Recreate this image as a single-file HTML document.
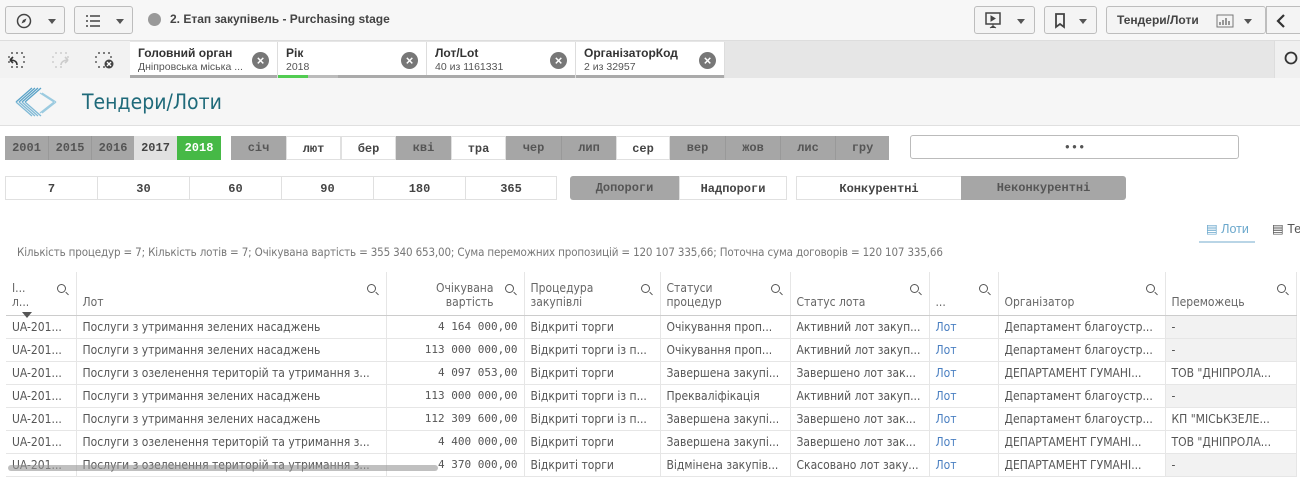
<!DOCTYPE html>
<html><head><meta charset="utf-8"><style>
*{box-sizing:border-box;margin:0;padding:0}
body{width:1300px;height:493px;overflow:hidden;background:#fff;font-family:"Liberation Sans","DejaVu Sans",sans-serif;position:relative;color:#595959}
.abs{position:absolute}
.tb{background:#f4f4f4;border:1px solid #bdbdbd;border-radius:3px;height:28px;top:6px}
.caret{position:absolute;width:0;height:0;border-left:4px solid transparent;border-right:4px solid transparent;border-top:5px solid #555}
.chip{position:absolute;top:42px;height:36px;background:#fff;border-right:1px solid #ddd}
.chip b{position:absolute;left:8px;top:4px;font-size:12px;color:#333}
.chip span{position:absolute;left:8px;top:19px;font-size:10.5px;color:#555}
.chip i{position:absolute;right:8px;top:10px;width:17px;height:17px;border-radius:50%;background:#777;color:#fff;font-style:normal;font-size:13px;line-height:17px;text-align:center;font-weight:bold}
.chip u{position:absolute;left:0;bottom:0;height:3px;background:#aaa;width:100%;text-decoration:none}
.btn{position:absolute;height:24px;font-size:12px;font-weight:bold;text-align:center;line-height:24px;color:#444;font-family:"Liberation Mono","DejaVu Sans Mono",monospace}
.g{background:#a6a6a6;color:#555}
.w{background:#fff;border:1px solid #e0e0e0}
table{position:absolute;left:6px;top:272px;border-collapse:collapse;font-size:12px;font-family:"DejaVu Sans Condensed","DejaVu Sans",sans-serif;table-layout:fixed}
td,th{border-right:1px solid #e6e6e6;border-bottom:1px solid #e6e6e6;height:23px;padding:0 6px;white-space:nowrap;overflow:hidden;color:#555;font-weight:normal;text-align:left}
th{height:43px;vertical-align:bottom;padding-bottom:6px;position:relative;border-bottom:1px solid #ccc;color:#666}
th .s{position:absolute;right:10px;top:12px;width:9px;height:9px;border:1.3px solid #555;border-radius:50%}
th .s:after{content:"";position:absolute;width:4px;height:1.3px;background:#555;right:-4px;bottom:-2px;transform:rotate(45deg)}
.n{text-align:right;font-family:"DejaVu Sans Mono",monospace;font-size:11px}
.l{color:#4a7fc1}
.gr{background:#f2f2f2}
</style></head><body>
<div class="abs" style="left:0;top:0;width:1300px;height:41px;background:#f7f7f7;border-bottom:1px solid #ddd"></div>
<div class="abs tb" style="left:5px;width:60px"><svg class="abs" style="left:10px;top:6px" width="16" height="16"><circle cx="8" cy="8" r="6.5" fill="none" stroke="#444" stroke-width="1.5"/><path d="M10.5 5.5 L9 9 L5.5 10.5 L7 7Z" fill="#444"/></svg><div class="caret" style="left:42px;top:12px"></div></div>
<div class="abs tb" style="left:74px;width:59px"><svg class="abs" style="left:10px;top:7px" width="16" height="14"><path d="M1 2h2M5 2h10M1 7h2M5 7h10M1 12h2M5 12h10" stroke="#444" stroke-width="1.6"/></svg><div class="caret" style="left:41px;top:12px"></div></div>
<div class="abs" style="left:148px;top:13px;width:13px;height:13px;border-radius:50%;background:#999"></div>
<div class="abs" style="left:170px;top:12px;font-size:12px;font-weight:bold;color:#444">2. Етап закупівель - Purchasing stage</div>
<div class="abs tb" style="left:974px;width:61px"><svg class="abs" style="left:10px;top:5px" width="16" height="17"><rect x="1" y="1" width="14" height="11" fill="none" stroke="#444" stroke-width="1.5"/><path d="M6 4l4 2.5-4 2.5z M8 12v3 M5 16l3-2 3 2" fill="#444" stroke="#444"/></svg><div class="caret" style="left:42px;top:12px"></div></div>
<div class="abs tb" style="left:1044px;width:53px"><svg class="abs" style="left:9px;top:6px" width="12" height="16"><path d="M2 1h8v13l-4-3-4 3z" fill="none" stroke="#444" stroke-width="1.8"/></svg><div class="caret" style="left:34px;top:12px"></div></div>
<div class="abs tb" style="left:1106px;width:160px"><span class="abs" style="left:10px;top:6px;font-size:12px;font-weight:bold;color:#444">Тендери/Лоти</span><svg class="abs" style="left:109px;top:7px" width="18" height="14"><rect x="1" y="1" width="16" height="12" fill="none" stroke="#777"/><path d="M4 11V8M7 11V6M10 11V4M13 11V7" stroke="#777" stroke-width="1.5"/></svg><div class="caret" style="left:137px;top:12px"></div></div>
<div class="abs" style="left:1266px;top:6px;width:40px;height:28px;background:#f4f4f4;border:1px solid #bdbdbd"><svg class="abs" style="left:9px;top:7px" width="10" height="14"><path d="M8 1L2 7l6 6" fill="none" stroke="#333" stroke-width="2.2"/></svg></div>
<div class="abs" style="left:0;top:41px;width:1300px;height:37px;background:#e6e6e6"></div>
<div class="abs" style="left:0;top:41px;width:130px;height:37px;background:#f2f2f2"></div>
<svg class="abs" style="left:8px;top:51px" width="120" height="18"><path d="M3 2h2M8 2h2M13 2h2M16 5v2M16 10v2M3 16h2M8 16h2M13 16h2M1 5v2M1 10v2" stroke="#555" stroke-width="1.4"/><path d="M9 14c0-4-3-5-7-5M2 9l3-3M2 9l3 3" fill="none" stroke="#333" stroke-width="1.6"/><path d="M47 2h2M52 2h2M57 2h2M60 5v2M45 5v2M45 10v2M47 16h2M52 16h2" stroke="#ccc" stroke-width="1.4"/><path d="M53 14c0-3 3-5 7-5M60 9l-3-3M60 9l-3 3" fill="none" stroke="#ccc" stroke-width="1.6"/><path d="M90 2h2M95 2h2M100 2h2M103 5v2M88 5v2M88 10v2M90 16h2M95 16h2" stroke="#555" stroke-width="1.4"/><circle cx="101" cy="13" r="4.5" fill="#444"/><path d="M99 11l4 4M103 11l-4 4" stroke="#fff" stroke-width="1.3"/></svg>
<div class="chip" style="left:130px;width:148px"><b>Головний орган</b><span>Дніпровська міська ...</span><i>×</i><u></u></div>
<div class="chip" style="left:278px;width:149px"><b>Рік</b><span>2018</span><i>×</i><u style="background:#bbb"></u><u style="background:#52cc52;width:30px"></u><u style="left:60px;width:89px;background:#aaa"></u></div>
<div class="chip" style="left:427px;width:149px"><b>Лот/Lot</b><span>40 из 1161331</span><i>×</i><u></u></div>
<div class="chip" style="left:576px;width:149px"><b>ОрганізаторКод</b><span>2 из 32957</span><i>×</i><u></u></div>
<div class="abs" style="left:1274px;top:41px;width:26px;height:37px;border-left:1px solid #ddd;background:#f0f0f0"><svg class="abs" style="left:9px;top:10px" width="16" height="16"><circle cx="7" cy="7" r="5.5" fill="none" stroke="#333" stroke-width="1.8"/></svg></div>
<div class="abs" style="left:0;top:78px;width:1300px;height:48px;background:#f6f6f6;border-bottom:1px solid #e0e0e0"></div>
<svg class="abs" style="left:12px;top:85px" width="48" height="34"><g stroke="#5aa3c8" stroke-width="1.3" fill="none"><path d="M20 3L4 17M23 3L7 17M26 3L10 17M29 3L13 17"/><path d="M4 17l16 14M7 17l16 14M10 17l16 14M13 17l16 14" stroke="#7fb9d6"/><path d="M28 8l14 9M30 8l14 9M42 17L28 28M44 17L30 28" stroke="#9ccbe0"/></g></svg>
<div class="abs" style="left:82px;top:90px;font-size:21px;color:#1f6a7a;font-family:'DejaVu Sans Condensed','DejaVu Sans',sans-serif">Тендери/Лоти</div>
<div class="btn g" style="left:5px;top:136px;width:43px">2001</div>
<div class="btn g" style="left:48px;top:136px;width:43px;border-left:1px solid #999">2015</div>
<div class="btn g" style="left:91px;top:136px;width:43px;border-left:1px solid #999">2016</div>
<div class="btn" style="left:134px;top:136px;width:43px;background:#e1e1e1">2017</div>
<div class="btn" style="left:177px;top:136px;width:44px;background:#46b946;color:#fff">2018</div>
<div class="btn g" style="left:231px;top:136px;width:55px">січ</div>
<div class="btn w" style="left:286px;top:136px;width:55px">лют</div>
<div class="btn w" style="left:341px;top:136px;width:55px">бер</div>
<div class="btn g" style="left:396px;top:136px;width:55px">кві</div>
<div class="btn w" style="left:451px;top:136px;width:55px">тра</div>
<div class="btn g" style="left:506px;top:136px;width:55px">чер</div>
<div class="btn g" style="left:561px;top:136px;width:55px;border-left:1px solid #999">лип</div>
<div class="btn w" style="left:616px;top:136px;width:54px">сер</div>
<div class="btn g" style="left:670px;top:136px;width:55px">вер</div>
<div class="btn g" style="left:725px;top:136px;width:55px;border-left:1px solid #999">жов</div>
<div class="btn g" style="left:780px;top:136px;width:55px;border-left:1px solid #999">лис</div>
<div class="btn g" style="left:835px;top:136px;width:54px;border-left:1px solid #999">гру</div>
<div class="btn w" style="left:910px;top:135px;width:329px;border:1px solid #bbb;border-radius:3px;color:#555">•••</div>
<div class="btn w" style="left:5px;top:176px;width:93px">7</div>
<div class="btn w" style="left:97px;top:176px;width:93px">30</div>
<div class="btn w" style="left:189px;top:176px;width:93px">60</div>
<div class="btn w" style="left:281px;top:176px;width:93px">90</div>
<div class="btn w" style="left:373px;top:176px;width:93px">180</div>
<div class="btn w" style="left:465px;top:176px;width:92px">365</div>
<div class="btn g" style="left:570px;top:176px;width:109px;border-radius:3px 0 0 3px">Допороги</div>
<div class="btn w" style="left:679px;top:176px;width:108px">Надпороги</div>
<div class="btn w" style="left:796px;top:176px;width:166px">Конкурентні</div>
<div class="btn g" style="left:961px;top:176px;width:165px;border-radius:0 3px 3px 0">Неконкурентні</div>
<div class="abs" style="left:1199px;top:219px;width:56px;height:24px;border-bottom:2px solid #b9d5e6"></div>
<div class="abs" style="left:1206px;top:221px;font-size:12.5px;color:#6aa7cc;white-space:nowrap">▤ Лоти</div>
<div class="abs" style="left:1272px;top:221px;font-size:12.5px;color:#555;white-space:nowrap;width:40px">▤ Те</div>
<div class="abs" style="left:17px;top:245px;font-size:11.5px;color:#777;font-family:'DejaVu Sans Condensed','DejaVu Sans',sans-serif;letter-spacing:-0.15px">Кількість процедур = 7; Кількість лотів = 7; Очікувана вартість = 355 340 653,00; Сума переможних пропозицій = 120 107 335,66; Поточна сума договорів = 120 107 335,66</div>
<table>
<colgroup><col style="width:70px"><col style="width:310px"><col style="width:138px"><col style="width:136px"><col style="width:130px"><col style="width:139px"><col style="width:69px"><col style="width:167px"><col style="width:131px"></colgroup>
<tr><th>I...<br>л...<span class="s"></span></th><th>Лот<span class="s"></span></th><th style="text-align:right;padding-right:30px">Очікувана<br>вартість<span class="s"></span></th><th>Процедура<br>закупівлі<span class="s"></span></th><th>Статуси<br>процедур<span class="s"></span></th><th>Статус лота<span class="s"></span></th><th>...<span class="s"></span></th><th>Організатор<span class="s"></span></th><th>Переможець<span class="s"></span></th></tr>
<tr><td>UA-201...</td><td>Послуги з утримання зелених насаджень</td><td class="n">4 164 000,00</td><td>Відкриті торги</td><td>Очікування проп...</td><td>Активний лот закуп...</td><td class="l">Лот</td><td>Департамент благоустр...</td><td class="gr">-</td></tr>
<tr><td>UA-201...</td><td>Послуги з утримання зелених насаджень</td><td class="n">113 000 000,00</td><td>Відкриті торги із п...</td><td>Очікування проп...</td><td>Активний лот закуп...</td><td class="l">Лот</td><td>Департамент благоустр...</td><td class="gr">-</td></tr>
<tr><td>UA-201...</td><td>Послуги з озеленення територій та утримання з...</td><td class="n">4 097 053,00</td><td>Відкриті торги</td><td>Завершена закупі...</td><td>Завершено лот зак...</td><td class="l">Лот</td><td>ДЕПАРТАМЕНТ ГУМАНІ...</td><td>ТОВ "ДНІПРОЛА...</td></tr>
<tr><td>UA-201...</td><td>Послуги з утримання зелених насаджень</td><td class="n">113 000 000,00</td><td>Відкриті торги із п...</td><td>Преквaліфікація</td><td>Активний лот закуп...</td><td class="l">Лот</td><td>Департамент благоустр...</td><td class="gr">-</td></tr>
<tr><td>UA-201...</td><td>Послуги з утримання зелених насаджень</td><td class="n">112 309 600,00</td><td>Відкриті торги із п...</td><td>Завершена закупі...</td><td>Завершено лот зак...</td><td class="l">Лот</td><td>Департамент благоустр...</td><td>КП "МІСЬКЗЕЛЕ...</td></tr>
<tr><td>UA-201...</td><td>Послуги з озеленення територій та утримання з...</td><td class="n">4 400 000,00</td><td>Відкриті торги</td><td>Завершена закупі...</td><td>Завершено лот зак...</td><td class="l">Лот</td><td>ДЕПАРТАМЕНТ ГУМАНІ...</td><td>ТОВ "ДНІПРОЛА...</td></tr>
<tr><td>UA-201...</td><td>Послуги з озеленення територій та утримання з...</td><td class="n">4 370 000,00</td><td>Відкриті торги</td><td>Відмінена закупів...</td><td>Скасовано лот заку...</td><td class="l">Лот</td><td>ДЕПАРТАМЕНТ ГУМАНІ...</td><td class="gr">-</td></tr>
</table>
<div class="abs" style="left:22px;top:312px;width:0;height:0;border-left:5px solid transparent;border-right:5px solid transparent;border-top:6px solid #555"></div>
<div class="abs" style="left:8px;top:465px;width:430px;height:6px;border-radius:3px;background:rgba(150,150,150,.6)"></div>
</body></html>
